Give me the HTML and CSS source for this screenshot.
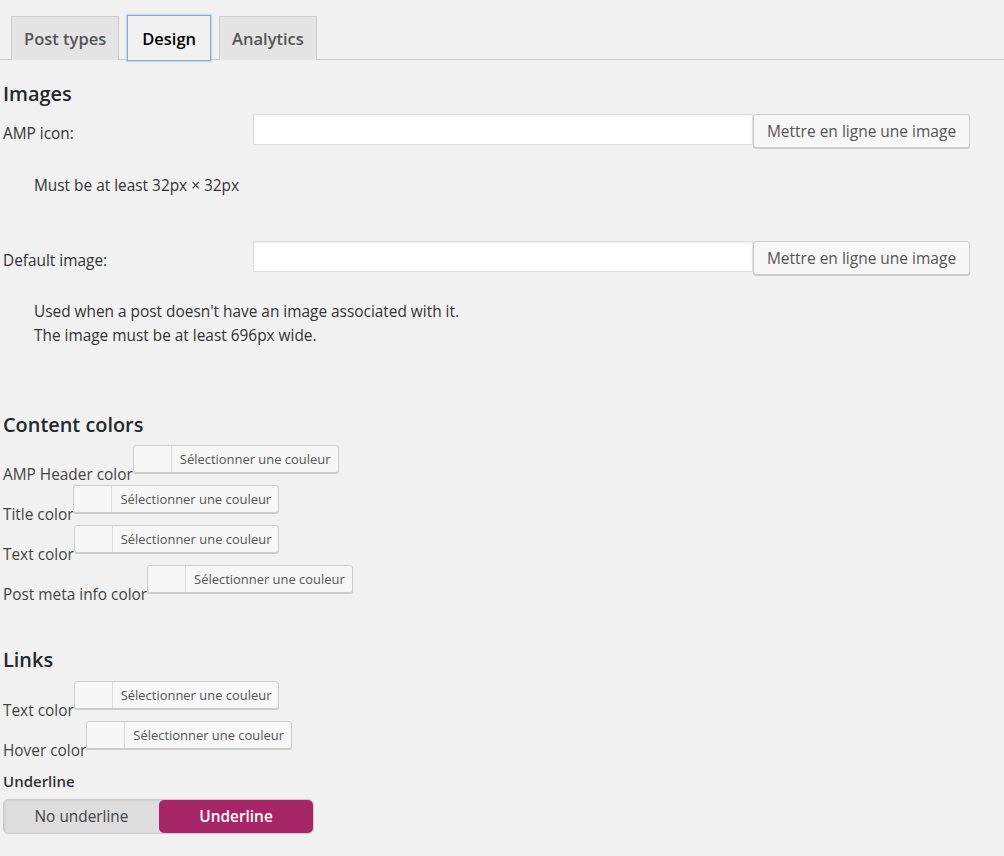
FILE: index.html
```html
<!DOCTYPE html>
<html lang="fr">
<head>
<meta charset="utf-8">
<title>AMP Design</title>
<link rel="stylesheet" href="styles.css">
</head>
<body>
<div class="page">
  <nav class="tabs">
    <a class="tab">Post types</a>
    <a class="tab active">Design</a>
    <a class="tab">Analytics</a>
  </nav>

  <h2 class="section-title first">Images</h2>
  <div class="field-row">
    <label class="field-label">AMP icon:</label>
    <input class="text-input" type="text">
    <button class="upload-btn" type="button">Mettre en ligne une image</button>
  </div>
  <p class="desc desc-1">Must be at least 32px × 32px</p>

  <div class="field-row row-2">
    <label class="field-label">Default image:</label>
    <input class="text-input" type="text">
    <button class="upload-btn" type="button">Mettre en ligne une image</button>
  </div>
  <p class="desc desc-2">Used when a post doesn't have an image associated with it.<br>The image must be at least 696px wide.</p>

  <h2 class="section-title colors">Content colors</h2>
  <div class="color-rows">
    <div class="color-row"><span class="color-label">AMP Header color</span><button class="picker" type="button"><span class="swatch"></span><span class="picker-text">Sélectionner une couleur</span></button></div>
    <div class="color-row"><span class="color-label">Title color</span><button class="picker" type="button"><span class="swatch"></span><span class="picker-text">Sélectionner une couleur</span></button></div>
    <div class="color-row"><span class="color-label">Text color</span><button class="picker" type="button"><span class="swatch"></span><span class="picker-text">Sélectionner une couleur</span></button></div>
    <div class="color-row"><span class="color-label">Post meta info color</span><button class="picker" type="button"><span class="swatch"></span><span class="picker-text">Sélectionner une couleur</span></button></div>
  </div>

  <h2 class="section-title links">Links</h2>
  <div class="color-rows links-rows">
    <div class="color-row"><span class="color-label">Text color</span><button class="picker" type="button"><span class="swatch"></span><span class="picker-text">Sélectionner une couleur</span></button></div>
    <div class="color-row"><span class="color-label">Hover color</span><button class="picker" type="button"><span class="swatch"></span><span class="picker-text">Sélectionner une couleur</span></button></div>
  </div>

  <div class="sub-label">Underline</div>
  <div class="toggle">
    <span class="toggle-opt">No underline</span>
    <span class="toggle-opt on">Underline</span>
  </div>
</div>
</body>
</html>
```

FILE: styles.css
```css
html, body {
  margin: 0;
  padding: 0;
  background: #f1f1f1;
}
body {
  font-family: "Open Sans", "Noto Sans", sans-serif;
  font-size: 15.4px;
  color: #444;
}
.page {
  padding-left: 3px;
  height: 856px;
  overflow: hidden;
}
.tabs {
  display: flex;
  gap: 8px;
  padding: 16px 0 0 11px;
  margin-left: -3px;
  border-bottom: 1px solid #ccc;
  height: 43px;
  align-items: flex-end;
}
.tab {
  box-sizing: border-box;
  height: 44px;
  margin-bottom: -1px;
  padding: 0 12px;
  display: flex;
  align-items: center;
  background: #e4e4e4;
  border: 1px solid #ccc;
  border-bottom: none;
  color: #555;
  font-size: 16.5px;
  font-weight: 600;
}
.tab.active {
  background: #f1f1f1;
  border: 1px solid #7fb0dd;
  color: #000;
  height: 46px;
  margin-bottom: -2px;
  padding: 0 14px;
  box-shadow: 0 0 1px 1px rgba(120, 170, 220, 0.35);
}
.section-title {
  margin: 0;
  font-size: 19.9px;
  line-height: 28px;
  font-weight: 600;
  color: #23282d;
}
.section-title.first { margin-top: 20px; }
.section-title.colors { margin-top: 63px; }
.section-title.links { margin-top: 41px; }

.field-row {
  display: flex;
  align-items: flex-start;
  margin-top: 6px;
}
.field-row.row-2 { margin-top: 43px; }
.field-label {
  width: 250px;
  flex: none;
  line-height: 24px;
  padding-top: 8px;
  color: #333;
}
.text-input {
  box-sizing: border-box;
  width: 500px;
  height: 31px;
  margin: 0;
  border: 1px solid #ddd;
  box-shadow: inset 0 1px 2px rgba(0, 0, 0, 0.07);
  background: #fff;
}
.upload-btn {
  box-sizing: border-box;
  width: 217px;
  height: 34px;
  margin: 0;
  border: 1px solid #ccc;
  border-radius: 3px;
  background: #f7f7f7;
  box-shadow: 0 1px 0 #ccc;
  font-family: inherit;
  font-size: 15.5px;
  color: #555;
  padding: 0;
}
.desc {
  margin: 26px 0 0 31px;
  line-height: 24px;
  color: #333;
}
.desc-2 { margin-top: 25px; }

.color-rows {
  margin-top: 6px;
}
.color-rows.links-rows {
  margin-top: 7px;
}
.color-row {
  display: flex;
  align-items: flex-start;
  height: 40px;
}
.color-label {
  margin-top: 20px;
  line-height: 20px;
  color: #444;
}
.picker {
  box-sizing: border-box;
  display: flex;
  align-items: stretch;
  height: 28px;
  margin: 0;
  padding: 0;
  border: 1px solid #ccc;
  border-radius: 3px;
  background: #f7f7f7;
  box-shadow: 0 1px 0 #ccc;
  font-family: inherit;
  cursor: pointer;
}
.swatch {
  width: 37px;
  border-right: 1px solid #ddd;
  background: #f7f7f7;
  border-radius: 3px 0 0 3px;
}
.picker-text {
  display: flex;
  align-items: center;
  padding: 0 7px 0 8px;
  font-size: 12.95px;
  color: #555;
}
.sub-label {
  margin-top: 10px;
  line-height: 20px;
  font-weight: 600;
  font-size: 15px;
  color: #333;
}
.toggle {
  margin-top: 8px;
  display: flex;
  width: 311px;
  height: 35px;
  box-sizing: border-box;
  border: 1px solid #ccc;
  border-radius: 5px;
  background: #ddd;
  overflow: hidden;
}
.toggle-opt {
  flex: 1;
  display: flex;
  align-items: center;
  justify-content: center;
  font-size: 15.4px;
  color: #444;
  box-shadow: inset 1px 1px 2px rgba(0, 0, 0, 0.08);
}
.toggle-opt.on {
  flex: none;
  width: 154px;
  background: #a62567;
  color: #fff;
  font-weight: 600;
  border-radius: 5px;
  box-shadow: none;
}
```
